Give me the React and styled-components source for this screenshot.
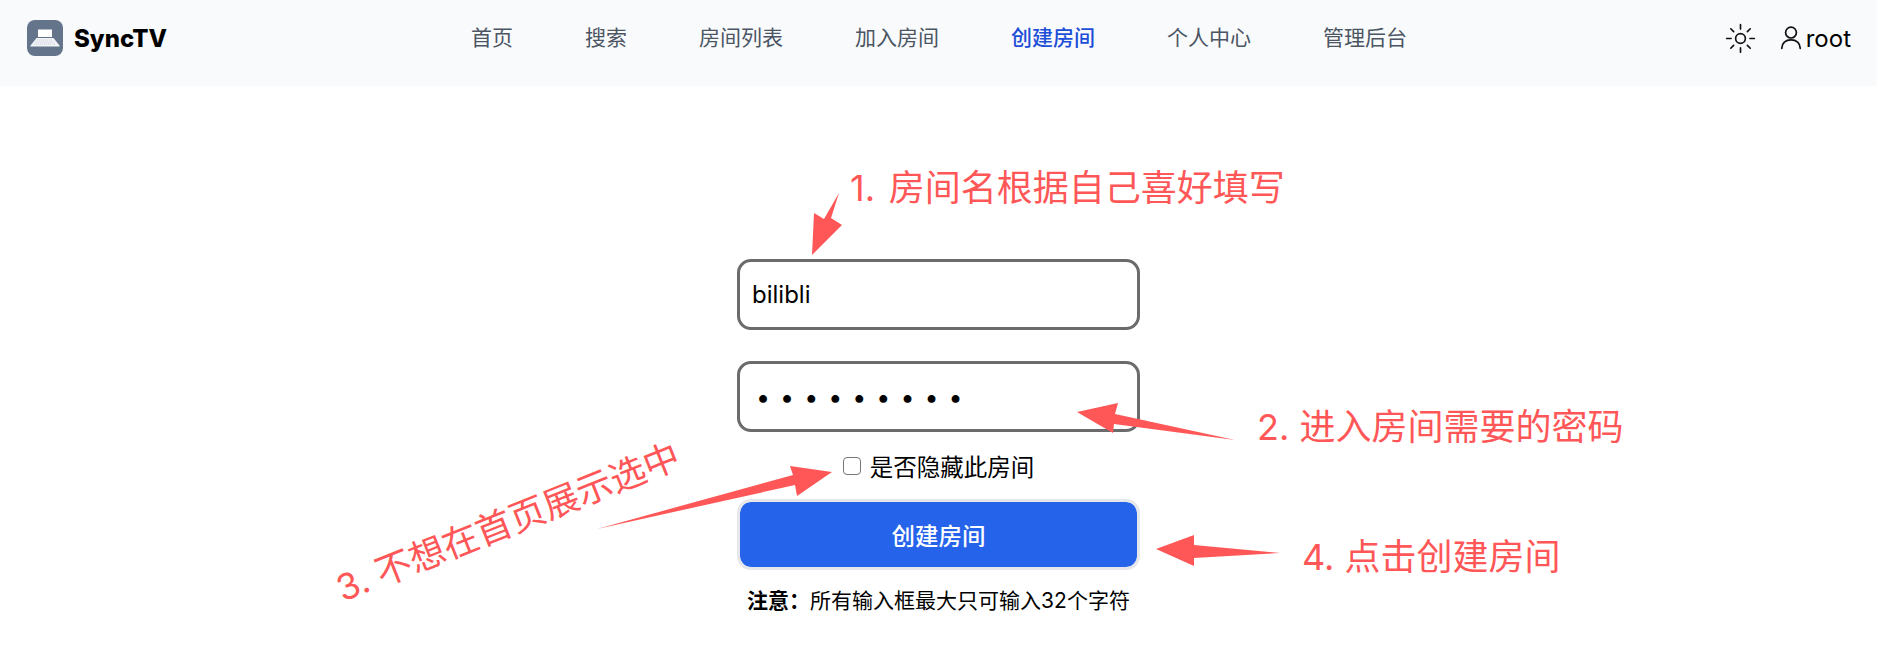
import React from "react";
import styled, { createGlobalStyle } from "styled-components";

const Global = createGlobalStyle`
  html, body { margin: 0; padding: 0; background: #fff; }
  body { font-family: Inter, "Noto Sans CJK SC", sans-serif; color: #000; }
`;
const Page = styled.div`
  position: relative;
  width: 1877px;
  height: 645px;
  overflow: hidden;
`;
const Header = styled.header`
  box-sizing: border-box;
  display: grid;
  grid-template-columns: 1fr auto 1fr;
  align-items: center;
  height: 86px;
  padding: 0 26px 10px 27px;
  background: #f9fafc;
`;
const Brand = styled.div`
  display: flex;
  align-items: center;
  gap: 11px;
  font-size: 24px;
  font-weight: 800;
`;
const Nav = styled.nav`
  display: flex;
  gap: 72px;
`;
const NavLink = styled.a`
  font-size: 21px;
  line-height: 28px;
  color: ${(p) => (p.$active ? "#1d4ed8" : "#4b5563")};
  font-weight: ${(p) => (p.$active ? 500 : 400)};
`;
const Tools = styled.div`
  display: flex;
  justify-content: flex-end;
  align-items: center;
`;
const UserBox = styled.div`
  display: flex;
  align-items: center;
  gap: 4px;
  margin-left: 24px;
  font-size: 24px;
`;
const Main = styled.main`
  display: flex;
  flex-direction: column;
  align-items: center;
  padding-top: 173px;
`;
const Form = styled.form`
  display: flex;
  flex-direction: column;
  width: 403px;
`;
const TextField = styled.input`
  box-sizing: border-box;
  width: 100%;
  height: 71px;
  margin-bottom: 31px;
  padding: 0 12px;
  border: 3px solid #6b6b6b;
  border-radius: 14px;
  outline: none;
  background: #fff;
  font-family: inherit;
  font-size: 24px;
  color: #000;
`;
const PasswordField = styled(TextField)`
  padding-left: 16px;
  font-size: 25px;
  letter-spacing: 10px;
`;
const CheckRow = styled.label`
  display: flex;
  justify-content: center;
  align-items: center;
  gap: 9px;
  margin-top: -15px;
  height: 36px;
  font-size: 23.5px;
  font-weight: 400;
`;
const Check = styled.input`
  appearance: none;
  box-sizing: border-box;
  width: 18px;
  height: 18px;
  margin: 0;
  border: 1.5px solid #767676;
  border-radius: 4px;
  background: #fff;
`;
const Submit = styled.button`
  box-sizing: border-box;
  width: 100%;
  height: 71px;
  margin-top: 15px;
  border: 3px solid #e5e7eb;
  border-radius: 14px;
  background: #2563eb;
  background-clip: padding-box;
  color: #fff;
  font-family: inherit;
  font-size: 23.5px;
  font-weight: 500;
`;
const Notice = styled.p`
  margin: 17px 0 0;
  text-align: center;
  font-size: 21px;
  line-height: 28px;
  font-weight: 400;
  white-space: nowrap;
`;
const Layer = styled.svg`
  position: absolute;
  inset: 0;
  width: 1877px;
  height: 645px;
  pointer-events: none;
`;
const Note = styled.div`
  position: absolute;
  left: ${(p) => p.$x}px;
  top: ${(p) => p.$y}px;
  font-size: 36px;
  line-height: 48px;
  font-weight: 400;
  word-spacing: ${(p) => p.$spread || 0}px;
  color: #ff5757;
  white-space: nowrap;
  transform-origin: left center;
  transform: rotate(${(p) => p.$rotate || 0}deg);
`;

const Logo = () => (
  <svg width="36" height="36" viewBox="0 0 36 36">
    <rect width="36" height="36" rx="8" fill="#64748b" />
    <rect x="11" y="9.500" width="14" height="7.500" fill="#fff" />
    <path d="M9.500 18h17l6 7.500a.6.6 0 0 1-.5 1H4a.6.6 0 0 1-.5-1z" fill="#f1f3f6" />
    <path d="M10 20h16M8.500 22h19M7 24h22" stroke="#b9c1cc" strokeWidth="0.7" strokeDasharray="1 1" />
  </svg>
);
const SunIcon = () => (
  <svg width="31" height="31" viewBox="0 0 28 28" fill="none" stroke="#111" strokeWidth="1.5" strokeLinecap="round">
    <circle cx="14" cy="14" r="4.400" />
    <path d="M14 1.500v4M14 22.500v4M1.500 14h4M22.500 14h4M5.200 5.200l2.600 2.600M20.200 20.200l2.600 2.600M5.200 22.800l2.600-2.600M20.200 7.800l2.600-2.600" />
  </svg>
);
const UserIcon = () => (
  <svg width="22" height="26" viewBox="0 0 20 24" fill="none" stroke="#111" strokeWidth="1.600" strokeLinecap="round">
    <circle cx="10" cy="7" r="5" />
    <path d="M1.500 21.500c0-4.800 3.500-7.800 8.500-7.800s8.500 3 8.500 7.800" />
  </svg>
);

const navItems = ["首页", "搜索", "房间列表", "加入房间", "创建房间", "个人中心", "管理后台"];

export default function App() {
  return (
    <Page>
      <Global />
      <Header>
        <Brand>
          <Logo />
          SyncTV
        </Brand>
        <Nav>
          {navItems.map((n) => (
            <NavLink key={n} $active={n === "创建房间"}>{n}</NavLink>
          ))}
        </Nav>
        <Tools>
          <SunIcon />
          <UserBox>
            <UserIcon />
            root
          </UserBox>
        </Tools>
      </Header>
      <Main>
        <Form>
          <TextField type="text" defaultValue="bilibli" />
          <PasswordField type="password" defaultValue="123456789" />
          <CheckRow>
            <Check type="checkbox" />
            是否隐藏此房间
          </CheckRow>
          <Submit type="button">创建房间</Submit>
          <Notice><b>注意：</b>所有输入框最大只可输入32个字符</Notice>
        </Form>
      </Main>
      <Layer viewBox="0 0 1877 645">
        <g fill="#ff5757">
          <polygon points="839,193 831,218 842,225 812,255 814,213 824,219" />
          <polygon points="1235,440 1114,424 1113,433 1077,412 1118,403 1115,414" />
          <polygon points="597,529 793,475 790,466 832,472 797,496 795,485" />
          <polygon points="1280,553 1194,558 1194,566 1156,549 1194,535 1194,545" />
        </g>
      </Layer>
      <Note $x={850} $y={164} $spread={3.500}>1. 房间名根据自己喜好填写</Note>
      <Note $x={1257} $y={403}>2. 进入房间需要的密码</Note>
      <Note $x={1302} $y={533}>4. 点击创建房间</Note>
      <Note $x={338} $y={566} $rotate={-21.800}>3. 不想在首页展示选中</Note>
    </Page>
  );
}
